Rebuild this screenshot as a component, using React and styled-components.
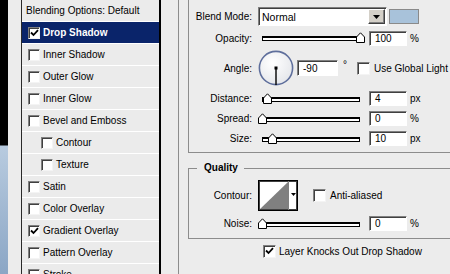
import React from 'react'
import styled, { createGlobalStyle } from 'styled-components'

const GlobalStyle = createGlobalStyle`
  html, body {
    margin: 0;
    padding: 0;
    background: #ececec;
  }
  body {
    font-family: "Liberation Sans", Arial, sans-serif;
    font-size: 10px;
    color: #000;
    overflow: hidden;
  }
`

const Screen = styled.div`
  display: flex;
  width: 450px;
  height: 274px;
  overflow: hidden;
`

const Backdrop = styled.div`
  flex: 0 0 8px;
  background: linear-gradient(to bottom, #000 0, #000 145px, #b8cbdf 146px, #8ba6c5 274px);
`

const Dialog = styled.div`
  flex: 1;
  display: flex;
  min-width: 0;
  padding-left: 13px;
  background: #ececec;
`

/* style list on the left */
const List = styled.ul`
  list-style: none;
  margin: 0;
  padding: 0;
  flex: 0 0 137px;
  border-left: 1px solid #2a2a2a;
  border-right: 2px solid #000;
  background: #ebebeb;
`

const Item = styled.li`
  display: flex;
  align-items: center;
  gap: 3px;
  height: 21px;
  border-bottom: 1px solid #fff;
  padding-left: ${p => p.$indent}px;
  white-space: nowrap;
  background: ${p => (p.$active ? '#0a246a' : 'transparent')};
  color: ${p => (p.$active ? '#fff' : '#000')};
  font-weight: ${p => (p.$active ? 'bold' : 'normal')};
`

const Box = styled.span`
  flex: 0 0 auto;
  box-sizing: border-box;
  display: inline-flex;
  align-items: center;
  justify-content: center;
  width: ${p => p.$size}px;
  height: ${p => p.$size}px;
  background: #fff;
  border: 1px solid;
  border-color: #808080 #f4f4f4 #f4f4f4 #808080;
  box-shadow: inset 1px 1px 0 #404040;
`

const Check = ({ checked, size = 12 }) => (
  <Box $size={size}>
    {checked ? (
      <svg width="9" height="8" viewBox="0 0 9 8">
        <path d="M1 3.5 L3.5 6 L8 1.2" fill="none" stroke="#000" strokeWidth="1.8" />
      </svg>
    ) : null}
  </Box>
)

/* settings on the right */
const Settings = styled.div`
  flex: 1;
  min-width: 0;
  padding-left: 17px;
`

const OuterGroup = styled.div`
  height: 100%;
  border-left: 1px solid #8c8c8c;
  padding-left: 9px;
`

const Structure = styled.div`
  width: 400px;
  padding: 7px 0 6px;
  border-left: 1px solid #8c8c8c;
  border-bottom: 1px solid #8c8c8c;
`

const Quality = styled.div`
  width: 400px;
  margin-top: 15px;
  padding-bottom: 7px;
  border: 1px solid #8c8c8c;
  border-right: none;
`

const Legend = styled.div`
  width: fit-content;
  height: 12px;
  line-height: 12px;
  margin: -7px 0 0 8px;
  padding: 0 6px 0 7px;
  background: #ececec;
  font-weight: bold;
`

const Row = styled.div`
  display: flex;
  align-items: center;
  height: ${p => p.$h}px;
  margin-top: ${p => p.$mt || 0}px;
  white-space: nowrap;
`

const Label = styled.span`
  flex: 0 0 63px;
  margin-right: 6px;
  text-align: right;
`

const Sunken = styled.span`
  box-sizing: border-box;
  display: flex;
  align-items: center;
  background: #fff;
  border: 1px solid;
  border-color: #808080 #fff #fff #808080;
  box-shadow: inset 1px 1px 0 #404040;
`

const Field = styled(Sunken)`
  width: ${p => p.$w || 38}px;
  height: ${p => p.$h || 15}px;
  padding-left: 5px;
`

const Unit = styled.span`
  margin-left: 3px;
`

const Select = styled(Sunken)`
  width: 129px;
  height: 19px;
  padding-left: 3px;
  justify-content: space-between;
  font-size: 10.5px;
`

const DropButton = styled.span`
  box-sizing: border-box;
  display: flex;
  align-items: center;
  justify-content: center;
  width: 17px;
  height: 15px;
  margin-right: 1px;
  background: #d4d0c8;
  border: 1px solid;
  border-color: #fff #404040 #404040 #fff;
  box-shadow: inset -1px -1px 0 #808080;
`

const Swatch = styled.span`
  width: 28px;
  height: 13px;
  margin-left: 2px;
  background: #a8c2da;
  border: 1px solid #8a8a8a;
`

const SliderWrap = styled.span`
  position: relative;
  flex: 0 0 107px;
  height: 12px;
  margin-right: 4px;
`

const Track = styled.span`
  position: absolute;
  left: 4px;
  top: 4px;
  width: 96px;
  height: 2px;
  background: #fff;
  border: 1px solid #000;
  border-top-width: 2px;
`

const Thumb = styled.svg`
  position: absolute;
  top: 0;
`

const Slider = ({ value, max }) => (
  <SliderWrap>
    <Track />
    <Thumb width="9" height="11" viewBox="0 0 9 11" style={{ left: Math.round((value / max) * 98) }}>
      <polygon points="0.5,10.5 0.5,5 4.5,0.8 8.5,5 8.5,10.5" fill="#fff" stroke="#000" strokeWidth="1" />
    </Thumb>
  </SliderWrap>
)

const SliderRow = ({ label, value, max, unit, mt }) => (
  <Row $h={15} $mt={mt}>
    <Label>{label}</Label>
    <Slider value={value} max={max} />
    <Field>{value}</Field>
    <Unit>{unit}</Unit>
  </Row>
)

const Degree = styled.span`
  margin: 0 10px 0 5px;
  align-self: flex-start;
  margin-top: 9px;
`

const CheckText = styled.span`
  margin-left: ${p => p.$gap || 4}px;
`

const Dial = () => (
  <svg width="36" height="36" viewBox="0 0 36 36" style={{ marginRight: 3 }}>
    <defs>
      <radialGradient id="dialFill" cx="40%" cy="35%" r="70%">
        <stop offset="0" stopColor="#ffffff" />
        <stop offset="1" stopColor="#e4e6ea" />
      </radialGradient>
    </defs>
    <circle cx="18" cy="18" r="16.6" fill="url(#dialFill)" stroke="#5f6f9c" strokeWidth="1.6" />
    <line x1="18" y1="18" x2="18" y2="35" stroke="#000" strokeWidth="1.4" />
    <rect x="16.5" y="16.5" width="3" height="3" fill="#000" />
  </svg>
)

const ContourPicker = () => (
  <svg width="40" height="31" viewBox="0 0 40 31">
    <rect x="0.5" y="0.5" width="39" height="30" fill="#fff" stroke="#000" />
    <rect x="1.5" y="1.5" width="37" height="28" fill="none" stroke="#404040" />
    <polygon points="2,29 30,2 30,29" fill="#808080" />
    <line x1="30.5" y1="1" x2="30.5" y2="30" stroke="#808080" />
    <polygon points="33,13 38,13 35.5,16" fill="#000" />
  </svg>
)

const Knockout = styled(Row)`
  margin-left: 75px;
`

const styles = [
  { name: 'Drop Shadow', checked: true, active: true },
  { name: 'Inner Shadow' },
  { name: 'Outer Glow' },
  { name: 'Inner Glow' },
  { name: 'Bevel and Emboss' },
  { name: 'Contour', sub: true },
  { name: 'Texture', sub: true },
  { name: 'Satin' },
  { name: 'Color Overlay' },
  { name: 'Gradient Overlay', checked: true },
  { name: 'Pattern Overlay' },
  { name: 'Stroke' },
]

const App = () => {
  return (
    <Screen>
      <GlobalStyle />
      <Backdrop />
      <Dialog>
        <List>
          <Item $indent={4}>Blending Options: Default</Item>
          {styles.map(s => (
            <Item key={s.name} $indent={s.sub ? 19 : 6} $active={s.active}>
              <Check checked={s.checked} />
              {s.name}
            </Item>
          ))}
        </List>

        <Settings>
          <OuterGroup>
            <Structure>
              <Row $h={19}>
                <Label>Blend Mode:</Label>
                <Select>
                  Normal
                  <DropButton>
                    <svg width="7" height="4" viewBox="0 0 7 4">
                      <polygon points="0,0 7,0 3.5,4" fill="#000" />
                    </svg>
                  </DropButton>
                </Select>
                <Swatch />
              </Row>
              <Row $h={16} $mt={4}>
                <Label>Opacity:</Label>
                <Slider value={100} max={100} />
                <Field>100</Field>
                <Unit>%</Unit>
              </Row>
              <Row $h={36} $mt={4}>
                <Label>Angle:</Label>
                <Dial />
                <Field $w={41} $h={16}>-90</Field>
                <Degree>°</Degree>
                <Check size={13} />
                <CheckText>Use Global Light</CheckText>
              </Row>
              <SliderRow label="Distance:" value={4} max={80} unit="px" mt={5} />
              <SliderRow label="Spread:" value={0} max={100} unit="%" mt={5} />
              <SliderRow label="Size:" value={10} max={100} unit="px" mt={5} />
            </Structure>

            <Quality>
              <Legend>Quality</Legend>
              <Row $h={31} $mt={6}>
                <Label>Contour:</Label>
                <ContourPicker />
                <span style={{ width: 15 }} />
                <Check size={13} />
                <CheckText>Anti-aliased</CheckText>
              </Row>
              <SliderRow label="Noise:" value={0} max={100} unit="%" mt={5} />
            </Quality>

            <Knockout $h={12} $mt={6}>
              <Check size={13} checked />
              <CheckText $gap={3}>Layer Knocks Out Drop Shadow</CheckText>
            </Knockout>
          </OuterGroup>
        </Settings>
      </Dialog>
    </Screen>
  )
}

export default App
